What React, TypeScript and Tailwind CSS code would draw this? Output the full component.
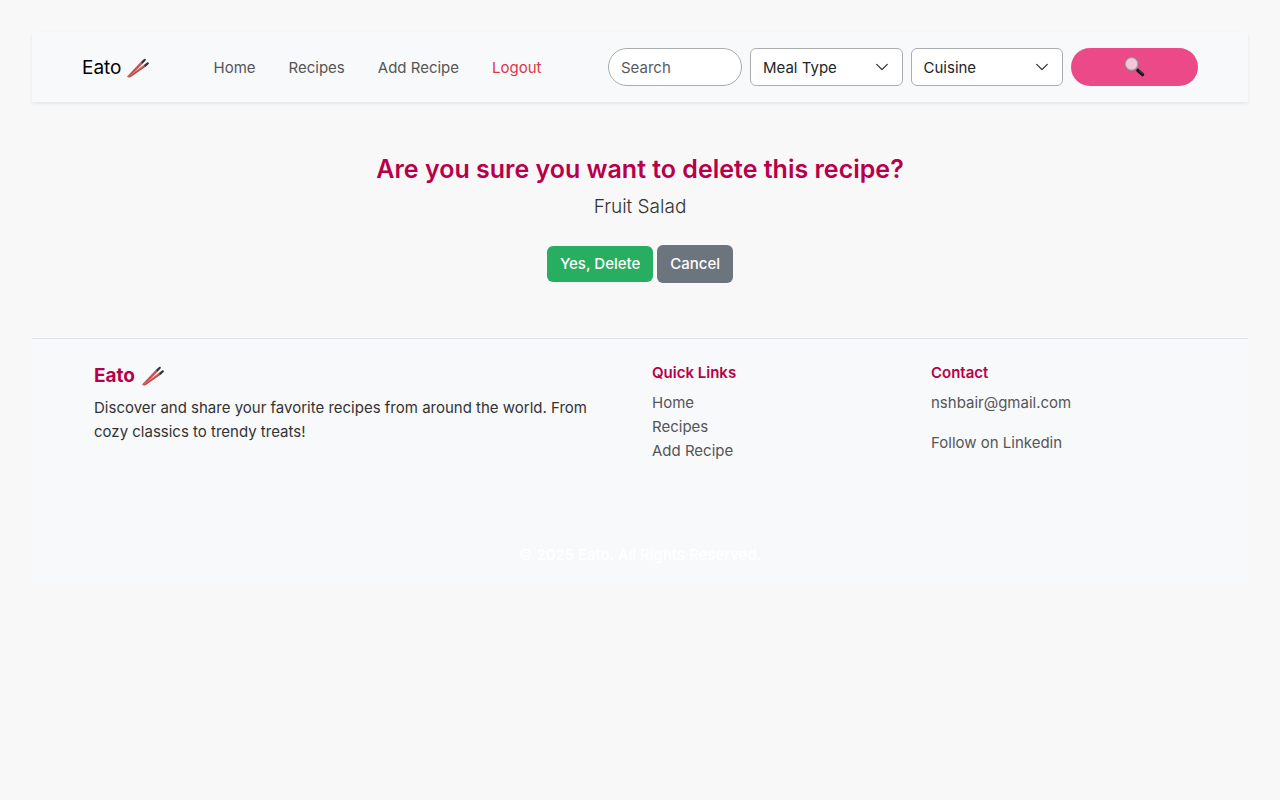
import type { ReactNode } from "react";

function Chopsticks() {
  return (
    <svg viewBox="0 0 24 20" className="h-5 w-6 shrink-0" role="img" aria-label="chopsticks">
      <path d="M1 18.6 15 3.8 16.8 5.4 3.4 19.2Q1.8 19.6 1 18.6Z" fill="#c8504e" />
      <path d="M14.9 4 18.1 1Q19.8.4 19.9 2L16.7 5.7Z" fill="#303638" />
      <path d="M2 19 18.1 6.8 19.6 8.8 4.8 19Q3 19.8 2 19Z" fill="#bd4745" />
      <path d="M2.4 18.5 18.2 7.4" stroke="#e39a96" strokeWidth=".5" />
      <path d="M17.9 7.1 21.3 4.2Q23.3 3.9 22.9 5.8L19.4 9Z" fill="#303638" />
    </svg>
  );
}

function Magnifier() {
  return (
    <svg viewBox="0 0 22 22" className="h-[22px] w-[22px]" aria-hidden="true">
      <path d="m11.8 12.2 2.4 2.2" stroke="#8b8588" strokeWidth="2" />
      <path d="m13.9 14.4 4.6 4.2" stroke="#171a1c" strokeWidth="3.4" strokeLinecap="round" />
      <path d="m14.8 14.1 3.8 3.5" stroke="#5c5e60" strokeWidth=".7" />
      <circle cx="7.6" cy="7.9" r="6.5" fill="#f3c6d9" stroke="#858285" strokeWidth="1.4" />
      <circle cx="7.6" cy="7.9" r="6.2" fill="none" stroke="#cbb9c1" strokeWidth=".5" />
    </svg>
  );
}

function SelectField({ label }: { label: string }) {
  return (
    <div className="relative min-w-0 flex-1">
      <select
        aria-label={label}
        className="h-[38px] w-full appearance-none rounded-md border border-[#aaacae] bg-white pt-0.5 pr-9 pl-3 text-[15px] text-[#212529]"
      >
        <option>{label}</option>
      </select>
      <svg
        viewBox="0 0 16 16"
        aria-hidden="true"
        className="pointer-events-none absolute top-3 right-3.5 h-3.5 w-3.5"
        fill="none"
        stroke="#343a40"
        strokeWidth="1.6"
        strokeLinecap="round"
        strokeLinejoin="round"
      >
        <path d="m2 5 6 6 6-6" />
      </svg>
    </div>
  );
}

function FooterHeading({ children }: { children: ReactNode }) {
  return <h2 className="mb-2 text-[15px] leading-5 font-semibold text-[#b8004a]">{children}</h2>;
}

export default function App() {
  return (
    <div className="min-h-screen bg-[#f8f8f8] p-8 font-['Inter',sans-serif] text-[15px] leading-6 text-[#333]">
      <nav className="bg-[#f8f9fb] py-4 shadow-[0_2px_4px_rgba(0,0,0,0.075)]">
        <div className="mx-auto flex max-w-[1140px] items-center px-3">
          <div className="flex items-center pt-0.5">
            <a href="#home" className="flex items-center gap-1 text-[19px] text-black">
              Eato
              <Chopsticks />
            </a>
            <div className="ml-16 flex gap-[33px] text-[#555]">
              <a href="#home">Home</a>
              <a href="#recipes">Recipes</a>
              <a href="#add">Add Recipe</a>
              <a href="#logout" className="text-[#dc3545]">Logout</a>
            </div>
          </div>
          <form className="ml-auto flex w-[590px] gap-2">
            <input
              type="search"
              aria-label="Search"
              placeholder="Search"
              className="h-[38px] w-[134px] rounded-full border border-[#aaacae] bg-white px-3 text-[15px] placeholder:text-[#595c5f]"
            />
            <SelectField label="Meal Type" />
            <SelectField label="Cuisine" />
            <button
              type="button"
              aria-label="Search recipes"
              className="flex h-[38px] w-[127px] items-center justify-center rounded-full bg-[#ec4989]"
            >
              <Magnifier />
            </button>
          </form>
        </div>
      </nav>

      <main className="px-3 pt-[51px] pb-[55px] text-center">
        <h1 className="mb-2 text-[25px] leading-8 font-semibold text-[#b8004a]">
          Are you sure you want to delete this recipe?
        </h1>
        <p className="text-[19px] leading-7 font-light">Fruit Salad</p>
        <div className="mt-6 flex items-center justify-center gap-1 text-white">
          <button type="button" className="h-9 rounded-md bg-[#27ae60] px-[13px] font-medium">
            Yes, Delete
          </button>
          <a href="#recipes" className="rounded-md bg-[#6c757d] px-[13px] py-[7px] font-medium">
            Cancel
          </a>
        </div>
      </main>

      <footer className="border-t border-[#dee2e6] bg-[#f8f9fb] pt-6">
        <div className="mx-auto grid max-w-[1140px] grid-cols-[2fr_1fr_1fr] px-3">
          <div className="px-3">
            <h2 className="mb-[7px] flex items-center gap-1.5 text-[19px] leading-[26px] font-bold text-[#b8004a]">
              Eato
              <Chopsticks />
            </h2>
            <p className="max-w-[520px]">
              Discover and share your favorite recipes from around the world. From cozy classics to trendy treats!
            </p>
          </div>
          <div className="px-3">
            <FooterHeading>Quick Links</FooterHeading>
            <ul className="text-[#555]">
              <li><a href="#home">Home</a></li>
              <li><a href="#recipes">Recipes</a></li>
              <li><a href="#add">Add Recipe</a></li>
            </ul>
          </div>
          <div className="px-3 text-[#555]">
            <FooterHeading>Contact</FooterHeading>
            <p className="mb-4"><a href="mailto:nshbair@gmail.com">nshbair@gmail.com</a></p>
            <p><a href="#linkedin">Follow on Linkedin</a></p>
          </div>
        </div>
        <p className="mt-20 pb-4 text-center font-medium text-white">© 2025 Eato. All Rights Reserved.</p>
      </footer>
    </div>
  );
}
